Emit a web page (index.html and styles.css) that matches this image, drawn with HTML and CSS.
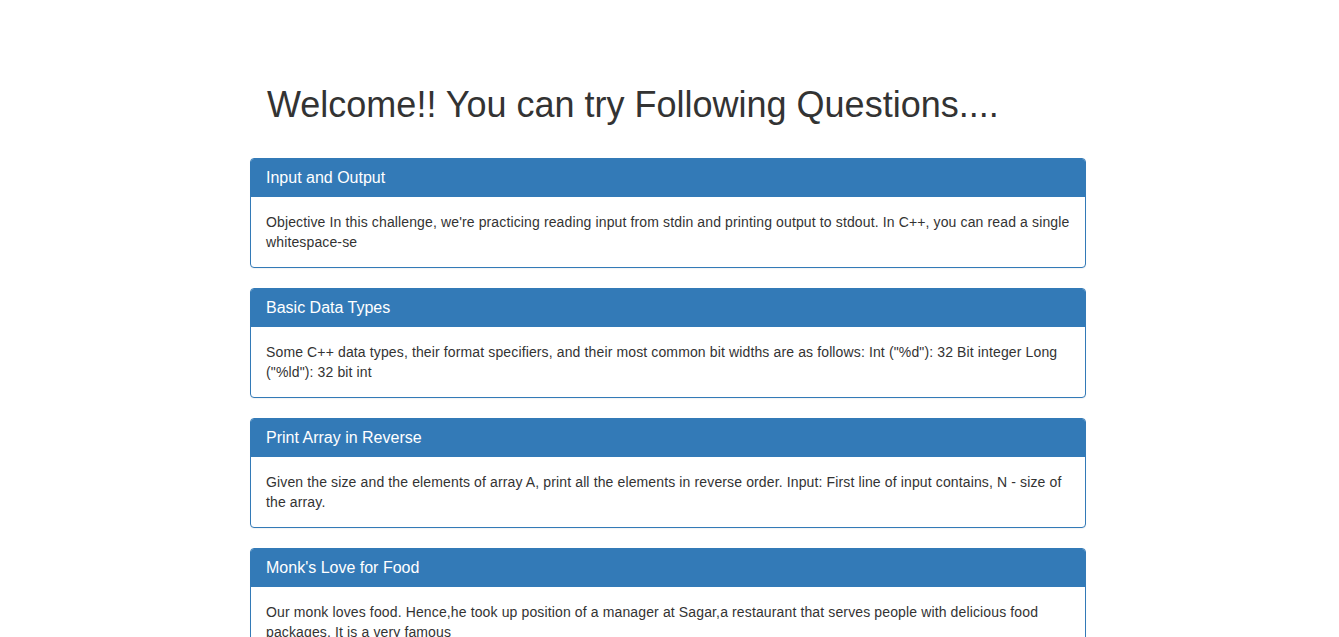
FILE: index.html
```html
<!DOCTYPE html>
<html>
<head>
<meta charset="utf-8">
<title>Questions</title>
<link rel="stylesheet" href="styles.css">
</head>
<body>
<div class="page">
  <h1 class="title">Welcome!! You can try Following Questions....</h1>
  <div class="list">
    <div class="panel">
      <div class="panel-heading">Input and Output</div>
      <div class="panel-body">Objective In this challenge, we're practicing reading input from stdin and printing output to stdout. In C++, you can read a single whitespace-se</div>
    </div>
    <div class="panel">
      <div class="panel-heading">Basic Data Types</div>
      <div class="panel-body">Some C++ data types, their format specifiers, and their most common bit widths are as follows: Int ("%d"): 32 Bit integer Long ("%ld"): 32 bit int</div>
    </div>
    <div class="panel">
      <div class="panel-heading">Print Array in Reverse</div>
      <div class="panel-body">Given the size and the elements of array A, print all the elements in reverse order. Input: First line of input contains, N - size of the array.</div>
    </div>
    <div class="panel">
      <div class="panel-heading">Monk's Love for Food</div>
      <div class="panel-body">Our monk loves food. Hence,he took up position of a manager at Sagar,a restaurant that serves people with delicious food packages. It is a very famous</div>
    </div>
  </div>
</div>
</body>
</html>
```
FILE: styles.css
```css
html, body {
  margin: 0;
  padding: 0;
  background: #fff;
}
body {
  font-family: "Liberation Sans", Arial, Helvetica, sans-serif;
  font-size: 14px;
  line-height: 20px;
  color: #333;
}
.page {
  width: 836px;
  margin-left: 250px;
}
.title {
  margin: 85px 0 0 17px;
  font-size: 36px;
  font-weight: 500;
  line-height: 1.1;
  color: #333;
}
.list {
  margin-top: 33px;
  display: flex;
  flex-direction: column;
  gap: 20px;
}
.panel {
  border: 1px solid #337ab7;
  border-radius: 4px;
  background: #fff;
  box-shadow: 0 1px 1px rgba(0,0,0,.05);
}
.panel-heading {
  background: #337ab7;
  color: #fff;
  padding: 10px 15px;
  font-size: 16px;
  line-height: 17px;
  border-bottom: 1px solid #337ab7;
  border-radius: 3px 3px 0 0;
}
.panel-body {
  padding: 15px;
  letter-spacing: 0.13px;
}
```
